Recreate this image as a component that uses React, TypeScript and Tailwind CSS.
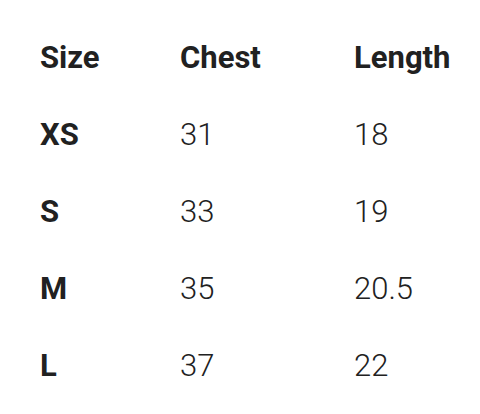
import React from "react";

const rows = [
  ["XS", "31", "18"],
  ["S", "33", "19"],
  ["M", "35", "20.5"],
  ["L", "37", "22"],
];

export default function App() {
  return (
    <div
      className="w-[480px] h-[414px] bg-white text-[#212121] pl-[40px] pt-[19px]"
      style={{ fontFamily: "Roboto, 'Liberation Sans', sans-serif" }}
    >
      <div className="grid grid-cols-[140px_174px_1fr] text-[31px] leading-[77px]">
        <div className="font-bold">Size</div>
        <div className="font-bold">Chest</div>
        <div className="font-bold">Length</div>
        {rows.map((r) => (
          <React.Fragment key={r[0]}>
            <div className="font-bold">{r[0]}</div>
            <div className="font-light">{r[1]}</div>
            <div className="font-light">{r[2]}</div>
          </React.Fragment>
        ))}
      </div>
    </div>
  );
}
